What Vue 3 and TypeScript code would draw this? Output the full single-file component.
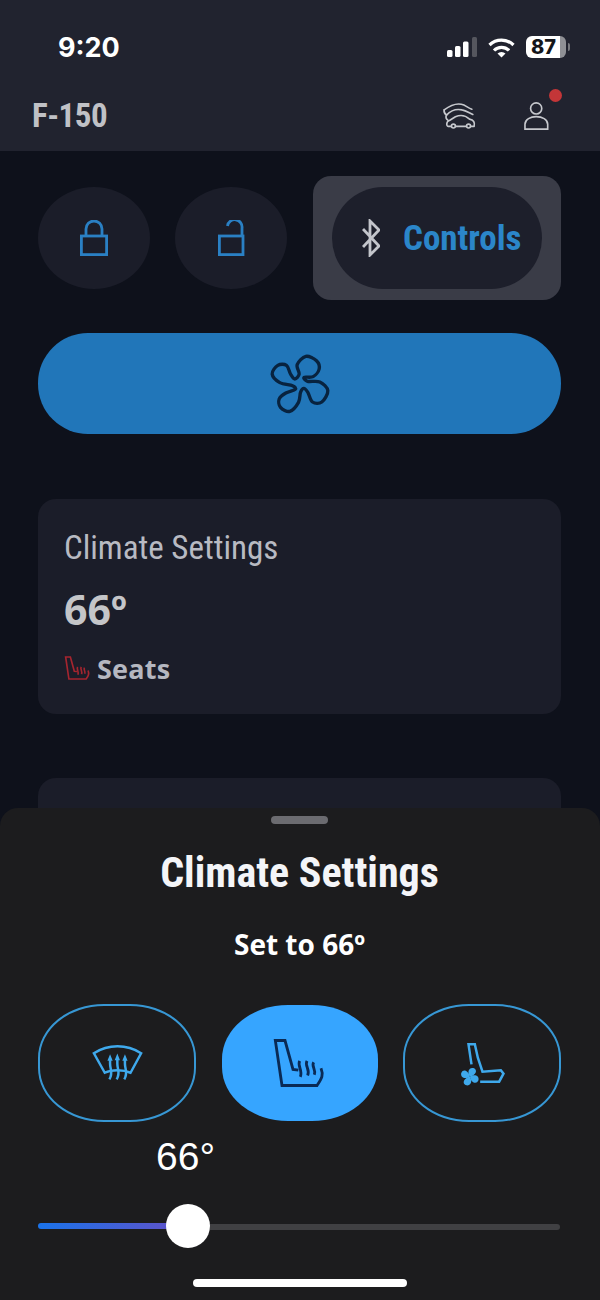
<script setup lang="ts">
type Point = [number, number]

const fanPoints: Point[] = [
  [210, 100], [204, 72], [230, 47], [262, 60], [270, 85], [252, 108], [225, 110], [235, 122], [272, 124],
  [296, 150], [278, 184], [250, 184], [236, 155], [224, 143], [214, 155], [208, 185], [182, 212],
  [154, 200], [150, 175], [170, 157], [198, 146], [190, 135], [152, 126], [129, 100], [146, 74], [172, 74],
  [184, 100], [197, 115],
]

function smoothClosed(points: Point[]): string {
  const n = points.length
  let d = `M${points[0][0]} ${points[0][1]}`
  for (let i = 0; i < n; i++) {
    const p0 = points[(i - 1 + n) % n]
    const p1 = points[i]
    const p2 = points[(i + 1) % n]
    const p3 = points[(i + 2) % n]
    const c1x = p1[0] + (p2[0] - p0[0]) / 6
    const c1y = p1[1] + (p2[1] - p0[1]) / 6
    const c2x = p2[0] - (p3[0] - p1[0]) / 6
    const c2y = p2[1] - (p3[1] - p1[1]) / 6
    d += `C${c1x} ${c1y} ${c2x} ${c2y} ${p2[0]} ${p2[1]}`
  }
  return d + 'Z'
}

const fanPath = smoothClosed(fanPoints)
const seatOutline = 'M254 224L238 222L214 135H185L205 270H310C325 248 330 238 322 218'
const seatWaves = 'M258 196C250 210 268 225 260 244M280 196C272 210 290 222 282 240M300 200C292 212 308 222 302 238'
const bladeAngles = [25, 115, 205, 295]
</script>

<template>
  <div class="phone">
    <header class="top">
      <div class="status">
        <span class="time">9:20</span>
        <div class="status-icons">
          <svg class="signal" width="30" height="20" viewBox="0 0 30 20">
            <rect x="0" y="13" width="5.500" height="7" rx="1.500" fill="#fff" />
            <rect x="8" y="9" width="5.500" height="11" rx="1.500" fill="#fff" />
            <rect x="16" y="4.500" width="5.500" height="15.500" rx="1.500" fill="#fff" />
            <rect x="25" y="0" width="5" height="20" rx="1.500" fill="#55565e" />
          </svg>
          <svg class="wifi" width="27" height="21" viewBox="0 0 27 21" fill="none" stroke="#fff" stroke-width="3.200">
            <path d="M1.500 8A17 17 0 0 1 25.500 8" />
            <path d="M6 13.500A10.500 10.500 0 0 1 21 13.500" />
            <path d="M13.500 20.500L9.500 16.500A5.800 5.800 0 0 1 17.500 16.500Z" fill="#fff" stroke="none" />
          </svg>
          <div class="battery-wrap">
            <div class="battery">87</div>
            <span class="nub"></span>
          </div>
        </div>
      </div>
      <div class="title-row">
        <h1 class="vehicle">F-150</h1>
        <div class="top-actions">
          <svg class="cars" width="35" height="28" viewBox="20 45 105 85" fill="none" stroke="#c6c8cd" stroke-width="5" stroke-linecap="round" stroke-linejoin="round">
            <path d="M26 72C42 60 62 52 78 55C90 57 98 66 110 70" />
            <path d="M26 72C24 80 28 84 33 88C48 72 62 68 80 72C92 74 100 80 113 86" />
            <path d="M33 88C30 94 32 100 38 104" />
            <path d="M46 122H38C32 122 32 106 42 104L60 93C76 86 92 90 103 100C115 102 120 110 117 122H108" />
            <path d="M62 122H92" />
            <circle cx="54" cy="121" r="6" />
            <circle cx="100" cy="121" r="6" />
          </svg>
          <div class="user">
            <svg width="27" height="30" viewBox="262 50 82 90" fill="none" stroke="#c6c8cd" stroke-width="5">
              <circle cx="302" cy="72" r="17" />
              <path d="M268 135V120C268 105 285 97 302 97C320 97 337 105 337 120V135Z" />
            </svg>
            <span class="dot"></span>
          </div>
        </div>
      </div>
    </header>

    <main class="content">
      <div class="controls-row">
        <button class="round">
          <svg width="28" height="36" viewBox="0 0 28 36" fill="none" stroke="#2a80c4" stroke-width="2.800">
            <rect x="1.400" y="16" width="25.200" height="18.600" />
            <path d="M6 16V9A8 8 0 0 1 22 9V16" />
          </svg>
        </button>
        <button class="round">
          <svg width="27" height="36" viewBox="0 0 27 36" fill="none" stroke="#2a80c4" stroke-width="2.800">
            <rect x="1.400" y="16" width="23.600" height="18.600" />
            <path d="M9.500 6A7.300 7.300 0 0 1 24 8V16" />
          </svg>
        </button>
        <div class="controls-frame">
          <button class="controls-pill">
            <svg width="18" height="38" viewBox="0 0 18 38" fill="none" stroke="#c3c5cb" stroke-width="2.800">
              <path d="M1 10L17 27L8 36V2L17 11L1 28" />
            </svg>
            <span class="controls-label">Controls</span>
          </button>
        </div>
      </div>

      <button class="fan-button">
        <svg width="62" height="60" viewBox="120 40 185 180" fill="none" stroke="#08233f" stroke-width="10">
          <path :d="fanPath" />
        </svg>
      </button>

      <section class="card">
        <h2 class="card-title">Climate Settings</h2>
        <div class="card-temp">66º</div>
        <div class="card-seats">
          <svg width="27" height="26" viewBox="175 125 165 155" fill="none" stroke="#a5252f" stroke-width="10">
            <path :d="seatOutline" />
            <path :d="seatWaves" />
          </svg>
          <span>Seats</span>
        </div>
      </section>

      <section class="card card-next"></section>
    </main>

    <section class="sheet">
      <div class="handle"></div>
      <h2 class="sheet-title">Climate Settings</h2>
      <p class="sheet-sub">Set to 66º</p>
      <div class="modes">
        <button class="mode">
          <svg width="55" height="38" viewBox="180 145 165 115" fill="none" stroke="#3fa9ec" stroke-width="7.500">
            <path d="M191 173C235 145 290 145 334 173L302 232C280 222 245 222 224 232Z" />
            <path d="M240 190V205C240 222 250 232 238 252M262 188V205C262 222 272 232 260 252M285 190V205C285 222 295 232 283 252" />
            <path d="M232 196L240 176L248 196ZM254 194L262 174L270 194ZM277 196L285 176L293 196Z" fill="#3fa9ec" stroke="none" />
          </svg>
        </button>
        <button class="mode mode-active">
          <svg width="55" height="52" viewBox="175 125 165 155" fill="none" stroke="#0a2a55" stroke-width="8.500">
            <path :d="seatOutline" />
            <path :d="seatWaves" />
          </svg>
        </button>
        <button class="mode">
          <svg width="47" height="45" viewBox="185 140 140 135" fill="none" stroke="#3fa9ec" stroke-width="7.500">
            <path d="M222 210L213 150H232L241 190L255 232L310 228L318 238L305 262H248" />
            <path v-for="angle in bladeAngles" :key="angle" d="M217 247C203 238 202 222 216 219C231 218 232 236 217 247Z" fill="#3fa9ec" stroke="none" :transform="`rotate(${angle} 217 247)`" />
          </svg>
        </button>
      </div>
      <div class="temp-label">66°</div>
      <div class="slider">
        <span class="track-on"></span>
        <span class="thumb"></span>
        <span class="track-off"></span>
      </div>
      <div class="home-bar"></div>
    </section>
  </div>
</template>

<style>
html, body { margin: 0; background: #0e111b; }
</style>

<style scoped>
.phone {
  position: relative;
  width: 600px;
  height: 1300px;
  overflow: hidden;
  background: #0e111b;
  font-family: "Open Sans", "Noto Sans", sans-serif;
}
button { border: 0; padding: 0; margin: 0; font: inherit; }
h1, h2, p { margin: 0; }

.top { height: 151px; background: #21232f; box-sizing: border-box; padding-top: 30px; }
.status { height: 34px; display: flex; align-items: center; justify-content: space-between; padding: 0 30px 0 58px; }
.time { padding-top: 2px; font-family: "Inter", sans-serif; font-size: 27px; font-weight: 700; color: #fff; line-height: 34px; }
.status-icons { display: flex; align-items: center; gap: 11px; }
.battery-wrap { display: flex; align-items: center; gap: 2px; }
.battery {
  width: 40px; height: 22px; border-radius: 6px;
  background: linear-gradient(90deg, #fff 0 85%, #8f9095 85% 100%);
  color: #14151a; font-family: "Inter", sans-serif; font-size: 20px; font-weight: 800;
  line-height: 22px; text-align: center; padding-right: 5px; box-sizing: border-box;
}
.nub { width: 2px; height: 8px; border-radius: 0 2px 2px 0; background: #77787e; }

.title-row { margin-top: 26px; height: 52px; display: flex; align-items: center; justify-content: space-between; padding: 0 50px 0 32px; }
.vehicle { font-family: "Roboto", sans-serif; font-stretch: 75%; font-size: 33px; font-weight: 700; letter-spacing: -0.5px; color: #c0c1c6; line-height: 48px; }
.top-actions { display: flex; align-items: center; gap: 46px; }
.cars { margin-top: -3px; }
.user { position: relative; width: 27px; height: 30px; }
.user svg { display: block; }
.dot { position: absolute; left: 26px; top: -12px; width: 13px; height: 13px; border-radius: 50%; background: #c43638; }

.content { padding: 25px 39px 0 38px; }
.controls-row { display: flex; align-items: center; gap: 25px; }
.round {
  flex: none; width: 112px; height: 102px; border-radius: 50%; background: #1b1d29;
  display: flex; align-items: center; justify-content: center;
}
.controls-frame {
  flex: 1; height: 124px; margin-left: 1px; box-sizing: border-box; padding: 11px 19px; border-radius: 18px; background: #3a3c47;
}
.controls-pill {
  width: 100%; height: 102px; border-radius: 51px; background: #1d1f2b;
  display: flex; align-items: center; gap: 23px; padding-left: 30px; box-sizing: border-box;
}
.controls-label { font-family: "Roboto", sans-serif; font-stretch: 75%; font-size: 35px; font-weight: 700; color: #2b86c9; }

.fan-button {
  display: flex; align-items: center; justify-content: center;
  width: 100%; height: 101px; margin-top: 33px; border-radius: 50px; background: #2176b9;
}

.card { margin-top: 65px; height: 215px; box-sizing: border-box; padding: 29px 26px 0; border-radius: 18px; background: #1b1d29; }
.card-next { margin-top: 64px; height: 200px; }
.card-title { font-family: "Roboto", sans-serif; font-stretch: 75%; font-size: 33px; font-weight: 400; line-height: 40px; color: #b8bac2; }
.card-temp { margin-top: 19px; font-family: "Open Sans", sans-serif; font-size: 41px; font-weight: 700; line-height: 44px; color: #c4c5c8; }
.card-seats {
  margin-top: 22px; display: flex; align-items: center; gap: 6px; height: 30px;
  font-size: 27px; font-weight: 700; letter-spacing: 0.2px; color: #b5b7c0;
}

.sheet {
  position: absolute; left: 0; right: 0; top: 808px; bottom: 0;
  background: #1c1c1e; border-radius: 18px 18px 0 0;
  padding: 8px 39px 0 38px; box-sizing: border-box;
}
.handle { width: 57px; height: 8px; margin: 0 auto; border-radius: 4px; background: #6b6b70; }
.sheet-title {
  margin-top: 29px; text-align: center; font-family: "Roboto", sans-serif; font-stretch: 75%;
  font-size: 42px; font-weight: 700; line-height: 40px; color: #f4f5f8;
}
.sheet-sub { margin-top: 36px; text-align: center; font-size: 28px; font-weight: 700; line-height: 30px; color: #fff; }
.modes { margin-top: 45px; display: flex; justify-content: space-between; align-items: center; }
.mode {
  width: 158px; height: 118px; box-sizing: border-box; border: 2px solid #3797d4;
  border-radius: 66px / 54px; background: transparent;
  display: flex; align-items: center; justify-content: center;
}
.mode-active { width: 156px; height: 116px; border: 0; background: #36a5ff; }
.temp-label {
  margin-top: 15px; padding-left: 118px; font-family: "Liberation Sans", sans-serif;
  font-size: 39px; line-height: 40px; color: #fff;
}
.slider { margin-top: 27px; height: 44px; display: flex; align-items: center; }
.track-on { width: 130px; height: 6px; border-radius: 3px 0 0 3px; background: linear-gradient(90deg, #1a73ea, #5a55cc); }
.thumb { flex: none; width: 44px; height: 44px; margin-left: -2px; border-radius: 50%; background: #fff; }
.track-off { flex: 1; height: 6px; margin-top: 2px; margin-right: 1px; border-radius: 0 3px 3px 0; background: #404043; }
.home-bar { width: 214px; height: 8px; margin: 31px auto 0; border-radius: 4px; background: #fff; }
</style>
